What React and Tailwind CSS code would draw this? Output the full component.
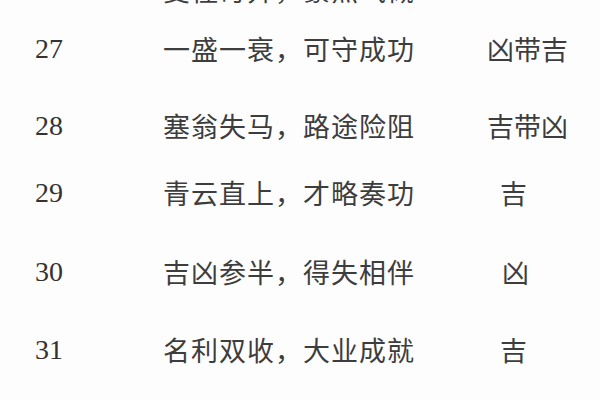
const rows = [
  { n: "26", text: "变怪奇异，豪杰气概", luck: "", mt: "mt-[-30px]", pl: "pl-0" },
  { n: "27", text: "一盛一衰，可守成功", luck: "凶带吉", mt: "mt-[19px]", pl: "pl-0" },
  { n: "28", text: "塞翁失马，路途险阻", luck: "吉带凶", mt: "mt-[37px]", pl: "pl-0" },
  { n: "29", text: "青云直上，才略奏功", luck: "吉", mt: "mt-[27px]", pl: "pl-[13px]" },
  { n: "30", text: "吉凶参半，得失相伴", luck: "凶", mt: "mt-[39px]", pl: "pl-[15px]" },
  { n: "31", text: "名利双收，大业成就", luck: "吉", mt: "mt-[38px]", pl: "pl-[13px]" },
];

export default function App() {
  return (
    <div className="flex h-[400px] w-[600px] flex-col overflow-hidden bg-[#fdfdfd] text-[#3d3d3d]">
      {rows.map((r) => (
        <div key={r.n} className={`flex h-[40px] shrink-0 items-center pl-[35px] ${r.mt}`}>
          <div className="w-[128px] font-['Liberation_Serif',serif] text-[28px] leading-[40px] text-[#333]">
            {r.n}
          </div>
          <div className="w-[324px] font-['Noto_Sans_CJK_SC',sans-serif] text-[27px] leading-[40px] tracking-[1px]">
            {r.text}
          </div>
          <div className={`font-['Noto_Sans_CJK_SC',sans-serif] text-[27px] leading-[40px] ${r.pl}`}>
            {r.luck}
          </div>
        </div>
      ))}
    </div>
  );
}
